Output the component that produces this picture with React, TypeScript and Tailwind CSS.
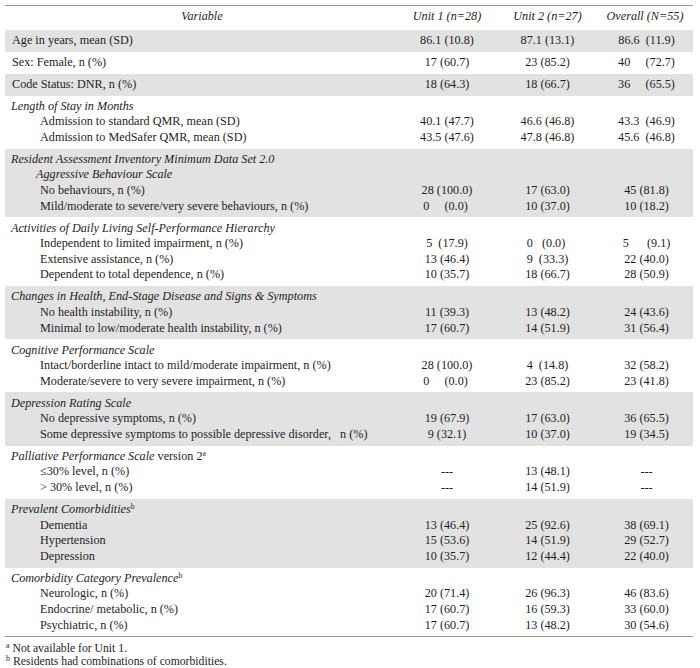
import React from "react";

type Line = {
  label: React.ReactNode;
  v?: [string, string, string];
  kind?: "top" | "head" | "sub" | "item";
};

type Block = { gray: boolean; lines: Line[] };

const blocks: Block[] = [
  { gray: true, lines: [{ label: "Age in years, mean (SD)", v: ["86.1 (10.8)", "87.1 (13.1)", "86.6  (11.9)"], kind: "top" }] },
  { gray: false, lines: [{ label: "Sex: Female, n (%)", v: ["17 (60.7)", "23 (85.2)", "40     (72.7)"], kind: "top" }] },
  { gray: true, lines: [{ label: "Code Status: DNR, n (%)", v: ["18 (64.3)", "18 (66.7)", "36     (65.5)"], kind: "top" }] },
  {
    gray: false,
    lines: [
      { label: "Length of Stay in Months", kind: "head" },
      { label: "Admission to standard QMR, mean (SD)", v: ["40.1 (47.7)", "46.6 (46.8)", "43.3  (46.9)"], kind: "item" },
      { label: "Admission to MedSafer QMR, mean (SD)", v: ["43.5 (47.6)", "47.8 (46.8)", "45.6  (46.8)"], kind: "item" },
    ],
  },
  {
    gray: true,
    lines: [
      { label: "Resident Assessment Inventory Minimum Data Set 2.0", kind: "head" },
      { label: "Aggressive Behaviour Scale", kind: "sub" },
      { label: "No behaviours, n (%)", v: ["28 (100.0)", "17 (63.0)", "45 (81.8)"], kind: "item" },
      { label: "Mild/moderate to severe/very severe behaviours, n (%)", v: ["0     (0.0) ", "10 (37.0)", "10 (18.2)"], kind: "item" },
    ],
  },
  {
    gray: false,
    lines: [
      { label: "Activities of Daily Living Self-Performance Hierarchy", kind: "head" },
      { label: "Independent to limited impairment, n (%)", v: ["5  (17.9)", "0   (0.0) ", "5      (9.1)"], kind: "item" },
      { label: "Extensive assistance, n (%)", v: ["13 (46.4)", "9  (33.3)", "22 (40.0)"], kind: "item" },
      { label: "Dependent to total dependence, n (%)", v: ["10 (35.7)", "18 (66.7)", "28 (50.9)"], kind: "item" },
    ],
  },
  {
    gray: true,
    lines: [
      { label: "Changes in Health, End-Stage Disease and Signs & Symptoms", kind: "head" },
      { label: "No health instability, n (%)", v: ["11 (39.3)", "13 (48.2)", "24 (43.6)"], kind: "item" },
      { label: "Minimal to low/moderate health instability, n (%)", v: ["17 (60.7)", "14 (51.9)", "31 (56.4)"], kind: "item" },
    ],
  },
  {
    gray: false,
    lines: [
      { label: "Cognitive Performance Scale", kind: "head" },
      { label: "Intact/borderline intact to mild/moderate impairment, n (%)", v: ["28 (100.0)", "4  (14.8)", "32 (58.2)"], kind: "item" },
      { label: "Moderate/severe to very severe impairment, n (%)", v: ["0     (0.0) ", "23 (85.2)", "23 (41.8)"], kind: "item" },
    ],
  },
  {
    gray: true,
    lines: [
      { label: "Depression Rating Scale", kind: "head" },
      { label: "No depressive symptoms, n (%)", v: ["19 (67.9)", "17 (63.0)", "36 (65.5)"], kind: "item" },
      { label: "Some depressive symptoms to possible depressive disorder,   n (%)", v: ["9 (32.1)", "10 (37.0)", "19 (34.5)"], kind: "item" },
    ],
  },
  {
    gray: false,
    lines: [
      {
        label: (
          <>
            <span className="italic">Palliative Performance Scale</span> version 2
            <sup className="text-[7.5px]">a</sup>
          </>
        ),
        kind: "head",
      },
      { label: "≤30% level, n (%)", v: ["---", "13 (48.1)", "---"], kind: "item" },
      { label: "> 30% level, n (%)", v: ["---", "14 (51.9)", "---"], kind: "item" },
    ],
  },
  {
    gray: true,
    lines: [
      {
        label: (
          <>
            <span className="italic">Prevalent Comorbidities</span>
            <sup className="text-[7.5px]">b</sup>
          </>
        ),
        kind: "head",
      },
      { label: "Dementia", v: ["13 (46.4)", "25 (92.6)", "38 (69.1)"], kind: "item" },
      { label: "Hypertension", v: ["15 (53.6)", "14 (51.9)", "29 (52.7)"], kind: "item" },
      { label: "Depression", v: ["10 (35.7)", "12 (44.4)", "22 (40.0)"], kind: "item" },
    ],
  },
  {
    gray: false,
    lines: [
      {
        label: (
          <>
            <span className="italic">Comorbidity Category Prevalence</span>
            <sup className="text-[7.5px]">b</sup>
          </>
        ),
        kind: "head",
      },
      { label: "Neurologic, n (%)", v: ["20 (71.4)", "26 (96.3)", "46 (83.6)"], kind: "item" },
      { label: "Endocrine/ metabolic, n (%)", v: ["17 (60.7)", "16 (59.3)", "33 (60.0)"], kind: "item" },
      { label: "Psychiatric, n (%)", v: ["17 (60.7)", "13 (48.2)", "30 (54.6)"], kind: "item" },
    ],
  },
];

function LineRow({ line }: { line: Line }) {
  const kind = line.kind ?? "item";
  const labelCls =
    kind === "top"
      ? "pl-[7px]"
      : kind === "head"
      ? "pl-[6px] italic"
      : kind === "sub"
      ? "pl-[31px] italic"
      : "pl-[35px]";
  const isHeadNode = kind === "head" && typeof line.label !== "string";
  return (
    <div className="grid grid-cols-[394px_96px_105px_93px] leading-[15.6px]">
      <div className={isHeadNode ? "pl-[6px] whitespace-pre" : labelCls + " whitespace-pre"}>{line.label}</div>
      {[0, 1, 2].map((i) => (
        <div key={i} className="text-center whitespace-pre">
          {line.v ? line.v[i] : ""}
        </div>
      ))}
    </div>
  );
}

export default function App() {
  return (
    <div
      className="w-[700px] h-[668px] bg-white text-[#1e1e1e] text-[12.2px] pl-[5px] pt-[5px]"
      style={{ fontFamily: '"Liberation Serif", "Times New Roman", serif' }}
    >
      <div className="w-[688px] border-t-[1.5px] border-b-[1.5px] border-[#9a9a9a]">
        <div className="grid grid-cols-[394px_96px_105px_93px] italic leading-[15.6px] pt-[3px] pb-[5px]">
          <div className="text-center">Variable</div>
          <div className="text-center">Unit 1 (n=28)</div>
          <div className="text-center">Unit 2 (n=27)</div>
          <div className="text-center pr-[3px]">Overall (N=55)</div>
        </div>
        {blocks.map((b, i) => (
          <div key={i} className={(b.gray ? "bg-[#e2e2e2] " : "bg-white ") + "py-[3.2px]"}>
            {b.lines.map((l, j) => (
              <LineRow key={j} line={l} />
            ))}
          </div>
        ))}
      </div>
      <div className="text-[11.7px] leading-[13px] pt-[5px] pl-[1px]">
        <div>
          <sup className="text-[8px]">a</sup> Not available for Unit 1.
        </div>
        <div>
          <sup className="text-[8px]">b</sup> Residents had combinations of comorbidities.
        </div>
      </div>
    </div>
  );
}
